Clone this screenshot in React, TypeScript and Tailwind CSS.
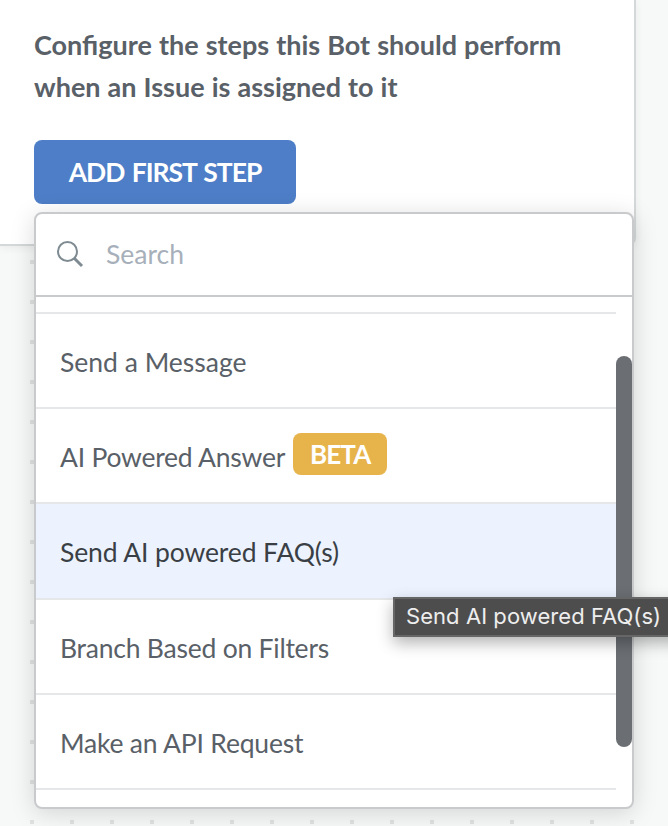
import clsx from 'clsx';

interface Step {
  label: string;
  beta?: boolean;
  active?: boolean;
  className: string;
}

const STEPS: Step[] = [
  { label: 'Send a Message', className: 'h-[95px]' },
  { label: 'AI Powered Answer', beta: true, className: 'h-[95px] tracking-[-0.23px]' },
  { label: 'Send AI powered FAQ(s)', active: true, className: 'h-24 tracking-[-0.12px]' },
  { label: 'Branch Based on Filters', className: 'h-[95px] tracking-[-0.23px]' },
  { label: 'Make an API Request', className: 'h-[95px] tracking-[-0.2px]' },
];

function SearchIcon() {
  return (
    <svg width="28" height="28" viewBox="0 0 28 28" fill="none" stroke="#7f8b92">
      <circle cx="11.5" cy="10.5" r="9.5" strokeWidth="2" />
      <path d="M18 17l8 8" strokeWidth="3" />
    </svg>
  );
}

function StepItem({ step }: { step: Step }) {
  return (
    <li
      className={clsx(
        'flex items-center border-b-2 border-[#e6e7e9] pl-6 text-[26.5px]',
        step.active ? 'bg-[#ecf3fe] text-[#3a3f45]' : 'text-[#596067]',
        step.className,
      )}
    >
      <span className="pt-1">{step.label}</span>
      {step.beta && (
        <span className="mb-1 ml-2 flex h-[42px] w-[94px] items-center justify-center rounded-lg bg-[#e7b34b] pt-0.5 text-[26px] font-bold tracking-[-0.9px] text-white">
          BETA
        </span>
      )}
    </li>
  );
}

function StepMenu() {
  return (
    <div className="absolute top-[212px] left-[34px] flex h-[597px] w-[600px] flex-col overflow-hidden rounded-lg border-2 border-[#c8cacc] bg-white shadow-[0_4px_24px_rgba(0,0,0,0.15)]">
      <div className="flex h-[83px] shrink-0 items-center border-b-2 border-[#c8cacc] pl-5">
        <SearchIcon />
        <span className="ml-[22px] text-[26.5px] text-[#a7b0ba]">Search</span>
      </div>
      <div className="flex flex-1">
        <ul className="flex-1 pt-[15px]">
          <li className="h-0.5 bg-[#e6e7e9]" />
          {STEPS.map((step) => (
            <StepItem key={step.label} step={step} />
          ))}
        </ul>
        <div className="w-4 pt-[59px]">
          <div className="h-[391px] rounded-full bg-[#6b6e73]" />
        </div>
      </div>
    </div>
  );
}

export default function App() {
  return (
    <div className="relative h-[826px] w-[668px] overflow-hidden bg-[#f7f9f9] bg-[conic-gradient(at_4px_4px,transparent_75%,#e0e2e2_0)] bg-[length:40px_40px] bg-[position:30px_20px] font-['Lato',sans-serif]">
      <div className="h-[246px] w-[636px] rounded-br-lg border-r-2 border-b-2 border-[#d5d8d8] bg-white pt-6 pl-[34px] shadow-[0_2px_8px_rgba(0,0,0,0.06)]">
        <h2 className="text-[27px] leading-[42px] font-bold whitespace-nowrap text-[#596067] [word-spacing:0.5px]">
          Configure the steps this Bot should perform
          <br />
          when an Issue is assigned to it
        </h2>
        <button className="mt-8 flex h-16 w-[262px] items-center justify-center rounded-lg bg-[#4d7ec7] pt-0.5 text-[26.5px] font-bold tracking-[-1.05px] text-white [word-spacing:2px]">
          ADD FIRST STEP
        </button>
      </div>
      <StepMenu />
      <div className="absolute top-[597px] left-[393px] flex h-10 w-[290px] items-center border-2 border-[#666] bg-[#4d4d4d] pb-px pl-[11px] font-['Inter',sans-serif] text-[22px] tracking-[0.06px] whitespace-nowrap text-[#eee] shadow-[0_6px_16px_rgba(0,0,0,0.3)]">
        Send AI powered FAQ(s)
      </div>
    </div>
  );
}
